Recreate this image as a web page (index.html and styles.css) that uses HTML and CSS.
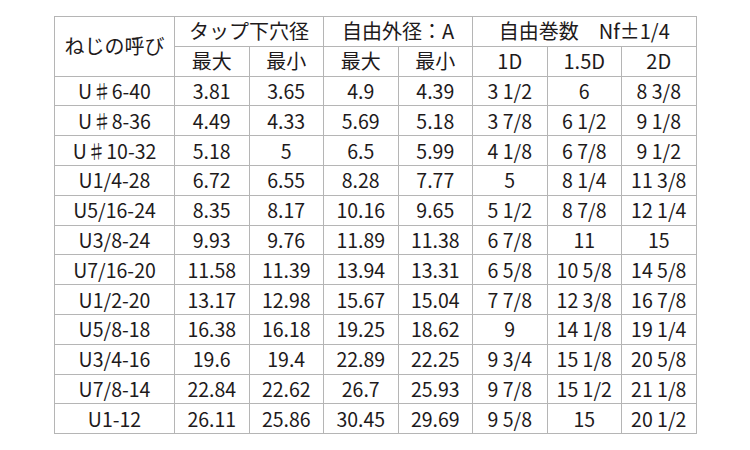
FILE: index.html
```html
<!DOCTYPE html>
<html lang="ja">
<head>
<meta charset="utf-8">
<link rel="stylesheet" href="styles.css">
</head>
<body>
<table class="spec">
<colgroup>
<col class="c-name"><col class="c-num"><col class="c-num"><col class="c-num"><col class="c-num"><col class="c-num"><col class="c-num"><col class="c-num">
</colgroup>
<thead>
<tr><th rowspan="2">ねじの呼び</th><th colspan="2">タップ下穴径</th><th colspan="2">自由外径：A</th><th colspan="3">自由巻数　Nf±1/4</th></tr>
<tr><th>最大</th><th>最小</th><th>最大</th><th>最小</th><th>1D</th><th>1.5D</th><th>2D</th></tr>
</thead>
<tbody>
<tr><td>U♯6-40</td><td>3.81</td><td>3.65</td><td>4.9</td><td>4.39</td><td>3 1/2</td><td>6</td><td>8 3/8</td></tr>
<tr><td>U♯8-36</td><td>4.49</td><td>4.33</td><td>5.69</td><td>5.18</td><td>3 7/8</td><td>6 1/2</td><td>9 1/8</td></tr>
<tr><td>U♯10-32</td><td>5.18</td><td>5</td><td>6.5</td><td>5.99</td><td>4 1/8</td><td>6 7/8</td><td>9 1/2</td></tr>
<tr><td>U1/4-28</td><td>6.72</td><td>6.55</td><td>8.28</td><td>7.77</td><td>5</td><td>8 1/4</td><td>11 3/8</td></tr>
<tr><td>U5/16-24</td><td>8.35</td><td>8.17</td><td>10.16</td><td>9.65</td><td>5 1/2</td><td>8 7/8</td><td>12 1/4</td></tr>
<tr><td>U3/8-24</td><td>9.93</td><td>9.76</td><td>11.89</td><td>11.38</td><td>6 7/8</td><td>11</td><td>15</td></tr>
<tr><td>U7/16-20</td><td>11.58</td><td>11.39</td><td>13.94</td><td>13.31</td><td>6 5/8</td><td>10 5/8</td><td>14 5/8</td></tr>
<tr><td>U1/2-20</td><td>13.17</td><td>12.98</td><td>15.67</td><td>15.04</td><td>7 7/8</td><td>12 3/8</td><td>16 7/8</td></tr>
<tr><td>U5/8-18</td><td>16.38</td><td>16.18</td><td>19.25</td><td>18.62</td><td>9</td><td>14 1/8</td><td>19 1/4</td></tr>
<tr><td>U3/4-16</td><td>19.6</td><td>19.4</td><td>22.89</td><td>22.25</td><td>9 3/4</td><td>15 1/8</td><td>20 5/8</td></tr>
<tr><td>U7/8-14</td><td>22.84</td><td>22.62</td><td>26.7</td><td>25.93</td><td>9 7/8</td><td>15 1/2</td><td>21 1/8</td></tr>
<tr><td>U1-12</td><td>26.11</td><td>25.86</td><td>30.45</td><td>29.69</td><td>9 5/8</td><td>15</td><td>20 1/2</td></tr>
</tbody>
</table>
</body>
</html>
```
FILE: styles.css
```css
html, body {
  margin: 0;
  padding: 0;
  background: #ffffff;
}
body {
  padding: 16px 0 0 54px;
  font-family: "Noto Sans CJK JP", "Noto Sans", sans-serif;
  color: #1e1a1b;
}
.spec {
  border-collapse: collapse;
  table-layout: fixed;
  width: 642px;
  border: 1px solid #5e5e5e;
}
.c-name { width: 120px; }
.c-num { width: 74.5px; }
.spec th,
.spec td {
  border: 1px solid #b5b5b5;
  height: 28.8px;
  padding: 0;
  text-align: center;
  vertical-align: middle;
  font-weight: normal;
  font-size: 19.5px;
  line-height: 20px;
  white-space: nowrap;
}
.spec thead th { font-size: 20px; }
```
